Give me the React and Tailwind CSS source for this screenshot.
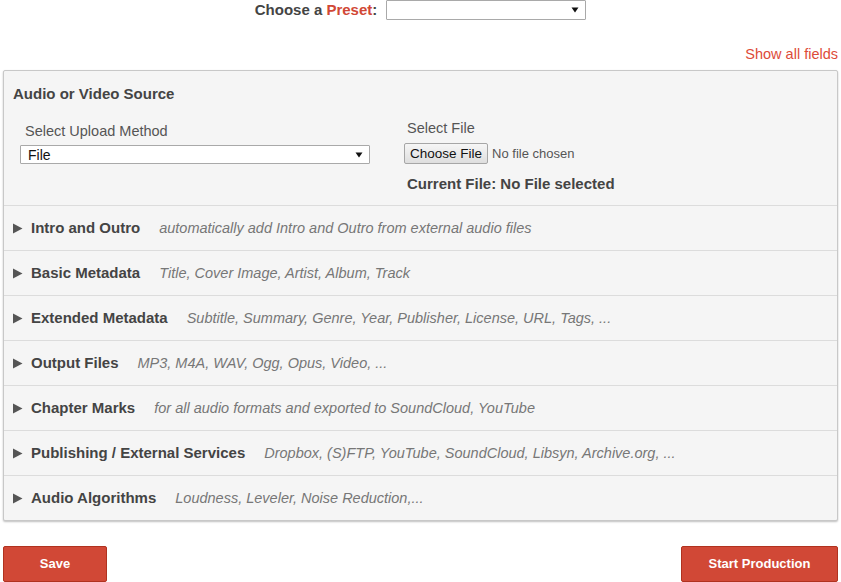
const sections = [
  { title: 'Intro and Outro', desc: 'automatically add Intro and Outro from external audio files' },
  { title: 'Basic Metadata', desc: 'Title, Cover Image, Artist, Album, Track' },
  { title: 'Extended Metadata', desc: 'Subtitle, Summary, Genre, Year, Publisher, License, URL, Tags, ...' },
  { title: 'Output Files', desc: 'MP3, M4A, WAV, Ogg, Opus, Video, ...' },
  { title: 'Chapter Marks', desc: 'for all audio formats and exported to SoundCloud, YouTube' },
  { title: 'Publishing / External Services', desc: 'Dropbox, (S)FTP, YouTube, SoundCloud, Libsyn, Archive.org, ...' },
  { title: 'Audio Algorithms', desc: 'Loudness, Leveler, Noise Reduction,...' }
];

const Caret = () => (
  <svg width="8" height="8" viewBox="0 0 8 8" className="shrink-0">
    <path d="M0.5 1.5h7L4 6.5z" fill="#111" />
  </svg>
);

const FakeSelect = ({ value, className }) => (
  <div
    className={`flex items-center justify-between bg-white border border-[#a9a9a9] rounded-[1px] pl-[7px] pr-[6px] text-[14px] text-[#111] ${className}`}
  >
    <span className="leading-none">{value}</span>
    <Caret />
  </div>
);

export default function App() {
  return (
    <div className="w-[841px] h-[582px] overflow-hidden bg-white font-['Liberation_Sans',Arial,sans-serif] text-[#444]">
      {/* Preset chooser */}
      <div className="flex items-center justify-center h-[20px]">
        <span className="text-[15px] font-bold mr-[9px] mt-[1px]">
          Choose a <span className="text-[#d14836]">Preset</span>:
        </span>
        <FakeSelect value="" className="w-[200px] h-[20px]" />
      </div>

      <div className="flex justify-end pr-[3px] mt-[24px] h-[20px]">
        <a className="text-[14.5px] leading-5 text-[#dd4b39] cursor-pointer">Show all fields</a>
      </div>

      {/* Main panel */}
      <div className="mx-[3px] mt-[6px] bg-[#f5f5f5] border border-[#c8c8c8] rounded-[2px] shadow-[0_1px_2px_rgba(0,0,0,0.25)]">
        <div className="pt-[13px] pb-[11px] pl-[9px]">
          <h3 className="text-[15px] font-bold leading-5">Audio or Video Source</h3>
          <div className="flex mt-[13px]">
            <div className="w-[391px] pl-[7px]">
              <label className="block mt-[4px] pl-[5px] text-[14.5px] leading-5 text-[#555]">
                Select Upload Method
              </label>
              <FakeSelect value="File" className="mt-[4px] w-[350px] h-[19px]" />
            </div>
            <div>
              <label className="block pl-[3px] mt-[1px] text-[14.5px] leading-5 text-[#555]">Select File</label>
              <div className="flex items-center mt-[5px]">
                <button className="h-[21px] px-[5px] text-[13.5px] text-[#111] border border-[#a6a6a6] rounded-[2px] bg-gradient-to-b from-[#f6f6f6] to-[#dedede]">
                  Choose File
                </button>
                <span className="ml-[4px] text-[13px] text-[#555]">No file chosen</span>
              </div>
              <p className="mt-[10px] pl-[3px] text-[15px] font-bold leading-5">
                Current File: No File selected
              </p>
            </div>
          </div>
        </div>

        {sections.map((s) => (
          <div
            key={s.title}
            className="flex items-center h-[45px] border-t border-[#dcdcdc] pl-[9px] pt-[1px]"
          >
            <svg width="10" height="11" viewBox="0 0 10 11" className="shrink-0">
              <path d="M0 0.5L9.5 5.5 0 10.5z" fill="#555" />
            </svg>
            <span className="ml-[8px] text-[15px] font-bold">{s.title}</span>
            <span className="ml-[19px] text-[14.5px] italic text-[#777]">{s.desc}</span>
          </div>
        ))}
      </div>

      {/* Actions */}
      <div className="flex justify-between px-[3px] mt-[25px]">
        <button className="w-[104px] h-[36px] bg-[#d14836] border border-[#b0321f] rounded-[2px] text-white text-[13px] font-bold">
          Save
        </button>
        <button className="w-[157px] h-[36px] bg-[#d14836] border border-[#b0321f] rounded-[2px] text-white text-[13px] font-bold">
          Start Production
        </button>
      </div>
    </div>
  );
}
